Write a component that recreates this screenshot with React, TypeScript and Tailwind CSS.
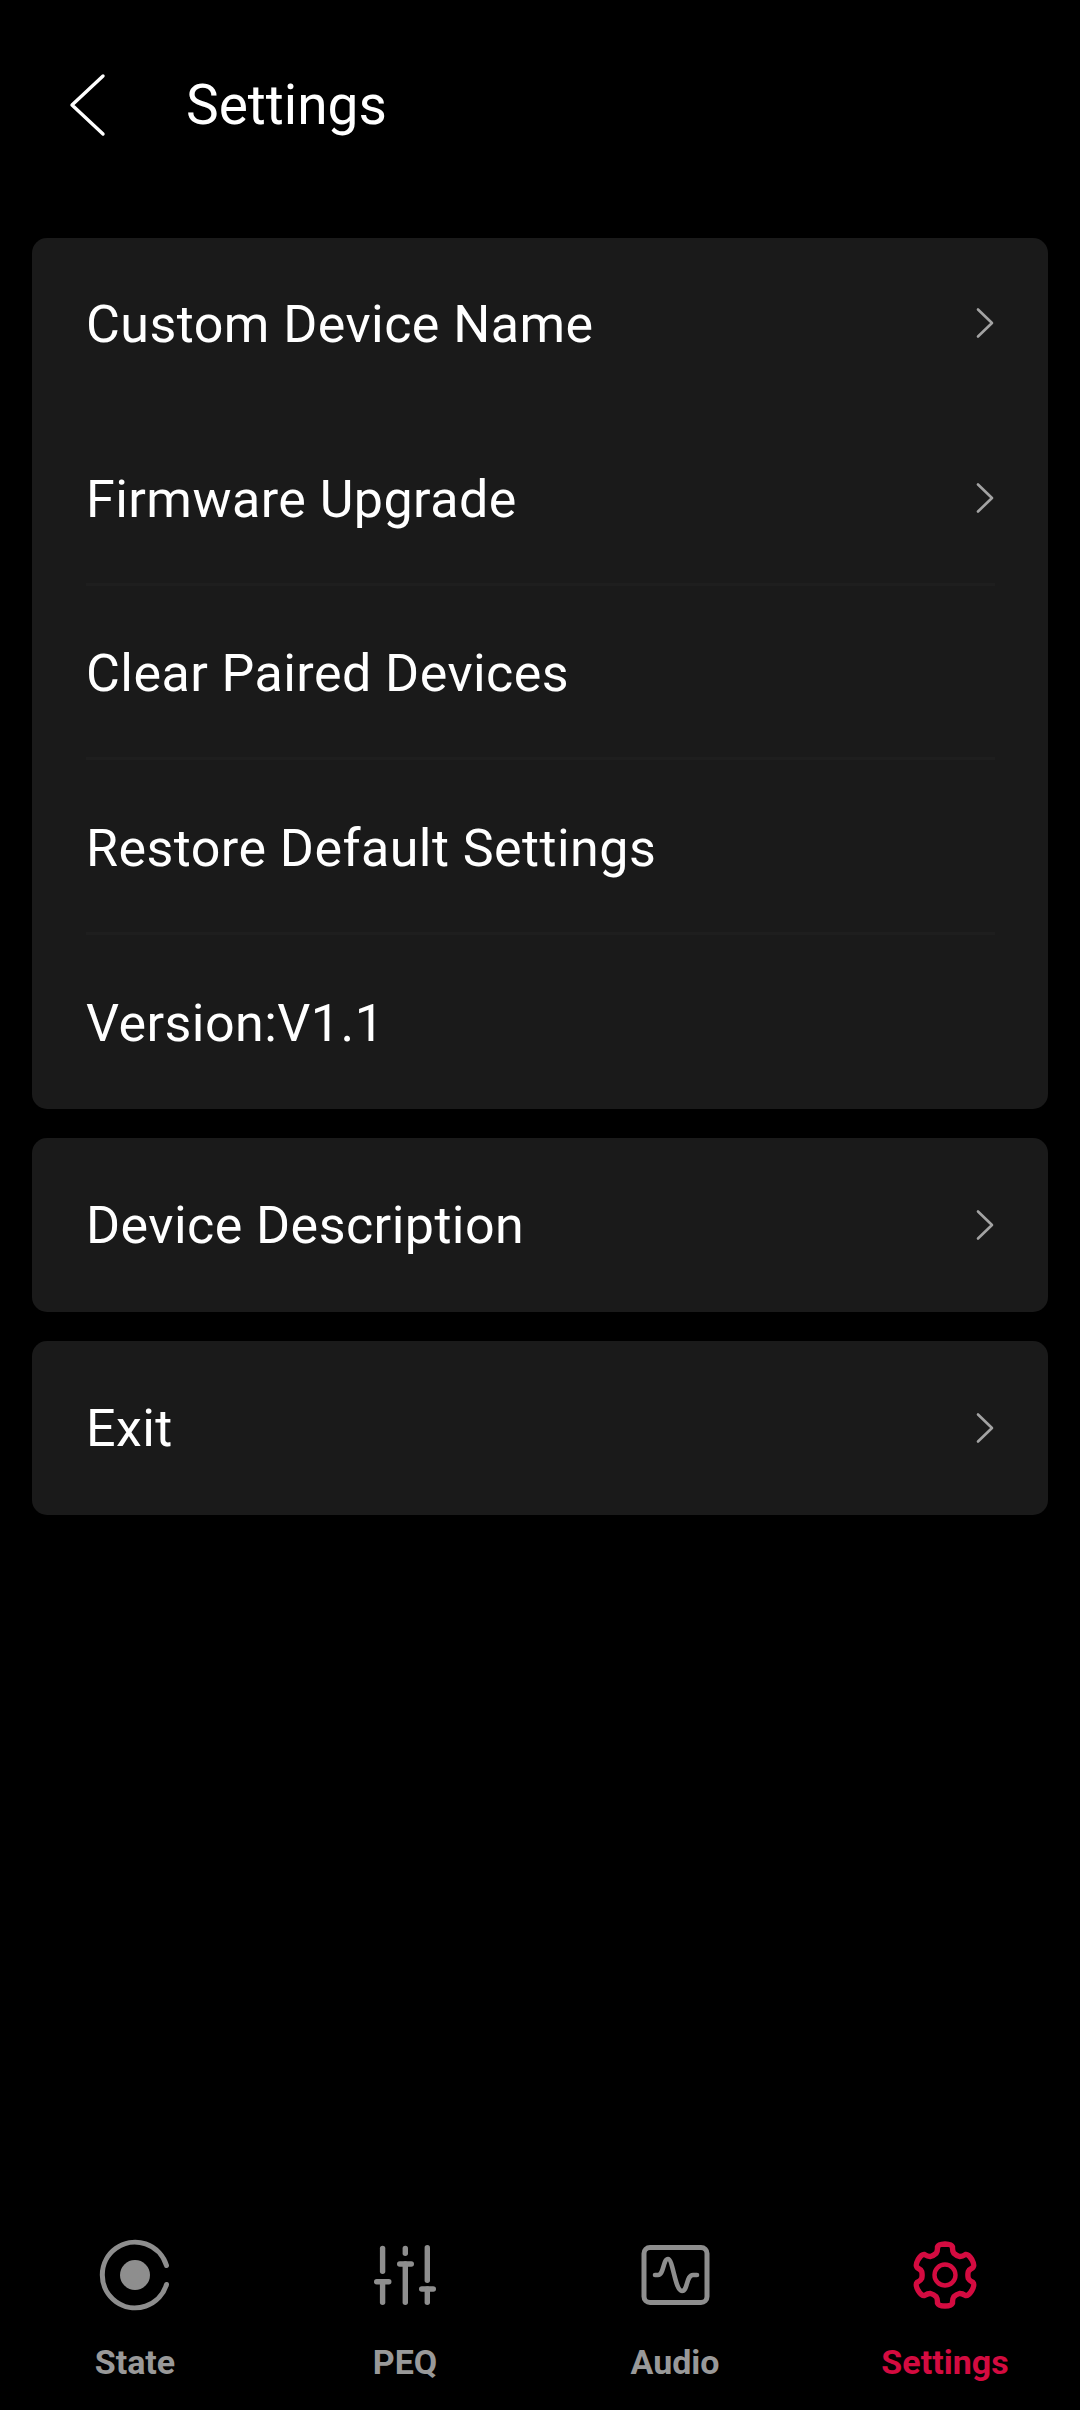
const rowText = "mt-[3px] text-[52px] leading-none tracking-[0.45px] text-white";

function ChevronRight() {
  return (
    <svg width="20" height="32" viewBox="0 0 20 32" fill="none" className="shrink-0">
      <path d="M3 2.5 L17 16 L3 29.5" stroke="#a3a3a3" strokeWidth="2.6" strokeLinecap="round" strokeLinejoin="round" />
    </svg>
  );
}

function Row({ label, arrow, divider, tall }: { label: string; arrow?: boolean; divider?: boolean; tall?: boolean }) {
  return (
    <div className={`relative flex items-center justify-between pl-[54px] pr-[53px] ${tall ? "h-[174.8px]" : "h-[174.5px]"}`}>
      <span className={rowText}>{label}</span>
      {arrow && <ChevronRight />}
      {divider && <div className="absolute bottom-0 left-[54px] right-[53px] h-[3px] bg-[#1e1e1e]" />}
    </div>
  );
}

function StateIcon({ color }: { color: string }) {
  return (
    <svg width="80" height="80" viewBox="0 0 80 80" fill="none">
      <path d="M71.5 30.5 A32.8 32.8 0 1 0 71.5 49.5" stroke={color} strokeWidth="5" strokeLinecap="round" />
      <circle cx="40" cy="40" r="15" fill={color} />
    </svg>
  );
}

function PeqIcon({ color }: { color: string }) {
  return (
    <svg width="80" height="80" viewBox="0 0 80 80" fill="none" stroke={color} strokeWidth="5.4" strokeLinecap="round">
      <path d="M17.6 13.4 V36.3" />
      <path d="M11.7 46.7 H23.8" />
      <path d="M17.6 46.7 V67.3" />
      <path d="M40.3 13.4 V18.3" />
      <path d="M34.7 29 H46.3" />
      <path d="M40.3 29 V67.3" />
      <path d="M62.3 12.7 V45.3" />
      <path d="M56.7 54 H68.3" />
      <path d="M62.3 54 V67.3" />
    </svg>
  );
}

function AudioIcon({ color }: { color: string }) {
  return (
    <svg width="80" height="80" viewBox="0 0 80 80" fill="none" stroke={color} strokeLinecap="round">
      <rect x="9" y="12.5" width="63" height="55" rx="6" strokeWidth="5" />
      <path d="M20 40 H23 C29 40 28 24 33 24 C38 24 40 56 47 56 C53 56 51 40 58 40 H62" strokeWidth="4.6" />
    </svg>
  );
}

function GearIcon({ color }: { color: string }) {
  // six teeth, one pointing straight up
  const pt = (r: number, deg: number) => {
    const a = (deg * Math.PI) / 180;
    return `${(40 + r * Math.sin(a)).toFixed(2)} ${(40 - r * Math.cos(a)).toFixed(2)}`;
  };
  let d = "";
  for (let i = 0; i < 6; i++) {
    const t = i * 60;
    d += `${i === 0 ? "M" : "L"}${pt(23.5, t - 22)} `;
    d += `Q${pt(25, t - 17)} ${pt(29, t - 15)} `;
    d += `Q${pt(31.5, t - 12)} ${pt(31, t)} `;
    d += `Q${pt(31.5, t + 12)} ${pt(29, t + 15)} `;
    d += `Q${pt(25, t + 17)} ${pt(23.5, t + 22)} `;
    d += `Q${pt(22.5, t + 30)} ${pt(23.5, t + 38)} `;
  }
  return (
    <svg width="80" height="80" viewBox="0 0 80 80" fill="none" stroke={color} strokeWidth="5.4" strokeLinejoin="round">
      <path d={d + "Z"} />
      <circle cx="40" cy="40" r="10.5" strokeWidth="4.4" />
    </svg>
  );
}

const gray = "#8e8e8e";
const red = "#d40b40";

function NavItem({ label, active, children }: { label: string; active?: boolean; children: React.ReactNode }) {
  return (
    <div className="flex flex-col items-center">
      {children}
      <span className={`mt-[27px] text-[34px] font-bold leading-[40px] ${active ? "text-[#d40b40]" : "text-[#999999]"}`}>
        {label}
      </span>
    </div>
  );
}

export default function App() {
  return (
    <div
      className="flex h-[2410px] w-[1080px] flex-col overflow-hidden bg-black"
      style={{ fontFamily: "Roboto, sans-serif" }}
    >
      <header className="flex h-[210px] items-center pl-[68px]">
        <svg width="38" height="64" viewBox="0 0 38 64" fill="none" className="mt-[-1px] shrink-0">
          <path d="M35 3 L4 32 L35 61" stroke="#ffffff" strokeWidth="3.4" strokeLinecap="round" strokeLinejoin="round" />
        </svg>
        <h1 className="ml-[80px] mt-[1px] text-[55px] font-normal leading-none text-white">Settings</h1>
      </header>

      <main className="flex flex-col gap-[28.5px] px-[32px] pt-[28px]">
        <section className="h-[871px] rounded-[15px] bg-[#1a1a1a]">
          <div className="-my-[2px]">
            <Row label="Custom Device Name" arrow tall />
            <Row label="Firmware Upgrade" arrow divider tall />
            <Row label="Clear Paired Devices" divider tall />
            <Row label="Restore Default Settings" divider tall />
            <Row label="Version:V1.1" tall />
          </div>
        </section>
        <section className="rounded-[15px] bg-[#1a1a1a]">
          <Row label="Device Description" arrow />
        </section>
        <section className="rounded-[15px] bg-[#1a1a1a]">
          <Row label="Exit" arrow />
        </section>
      </main>

      <nav className="mt-auto grid grid-cols-4 pb-[28px]">
        <NavItem label="State"><StateIcon color={gray} /></NavItem>
        <NavItem label="PEQ"><PeqIcon color={gray} /></NavItem>
        <NavItem label="Audio"><AudioIcon color={gray} /></NavItem>
        <NavItem label="Settings" active><GearIcon color={red} /></NavItem>
      </nav>
    </div>
  );
}
